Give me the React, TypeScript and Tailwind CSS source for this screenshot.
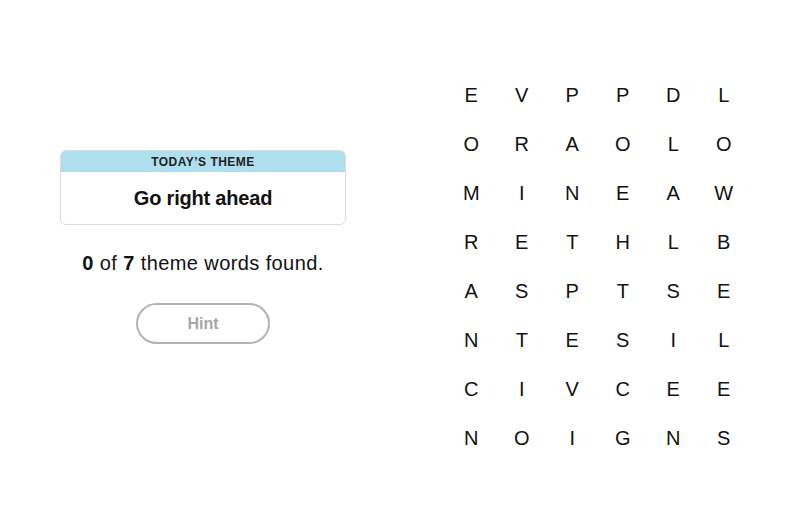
import React from 'react';

const rows = [
  'EVPPDL',
  'ORAOLO',
  'MINEAW',
  'RETHLB',
  'ASPTSE',
  'NTESIL',
  'CIVCEE',
  'NOIGNS',
];

const App: React.FC = () => {
  return (
    <div className="w-[800px] h-[511px] bg-white flex font-['Liberation_Sans',Arial,sans-serif] text-[#121212]">
      {/* Left info panel */}
      <div className="ml-[60px] w-[286px] pt-[150px] flex flex-col items-center">
        <div className="w-full rounded-md border border-[#dcdcdc] overflow-hidden">
          <div className="h-[21px] bg-[#aedfee] flex items-center justify-center text-[12px] font-bold tracking-[0.04em] text-[#222]">
            TODAY’S THEME
          </div>
          <div className="h-[52px] flex items-center justify-center text-[20px] font-bold tracking-[-0.01em]">
            Go right ahead
          </div>
        </div>
        <p className="mt-[27px] text-[20px] leading-[22px] tracking-[0.4px]">
          <span className="font-bold">0</span> of <span className="font-bold">7</span> theme words found.
        </p>
        <button className="mt-[29px] w-[134px] h-[41px] rounded-full border-2 border-[#b3b3b3] text-[16px] font-bold text-[#a6a6a6] bg-white">
          Hint
        </button>
      </div>

      {/* Letter grid */}
      <div className="ml-[100px] mt-[70px] grid grid-cols-6 w-[303px] h-fit">
        {rows.map((row, r) =>
          row.split('').map((ch, c) => (
            <div key={`${r}-${c}`} className="h-[49px] flex items-center justify-center text-[20px]">
              {ch}
            </div>
          ))
        )}
      </div>
    </div>
  );
};

export default App;
